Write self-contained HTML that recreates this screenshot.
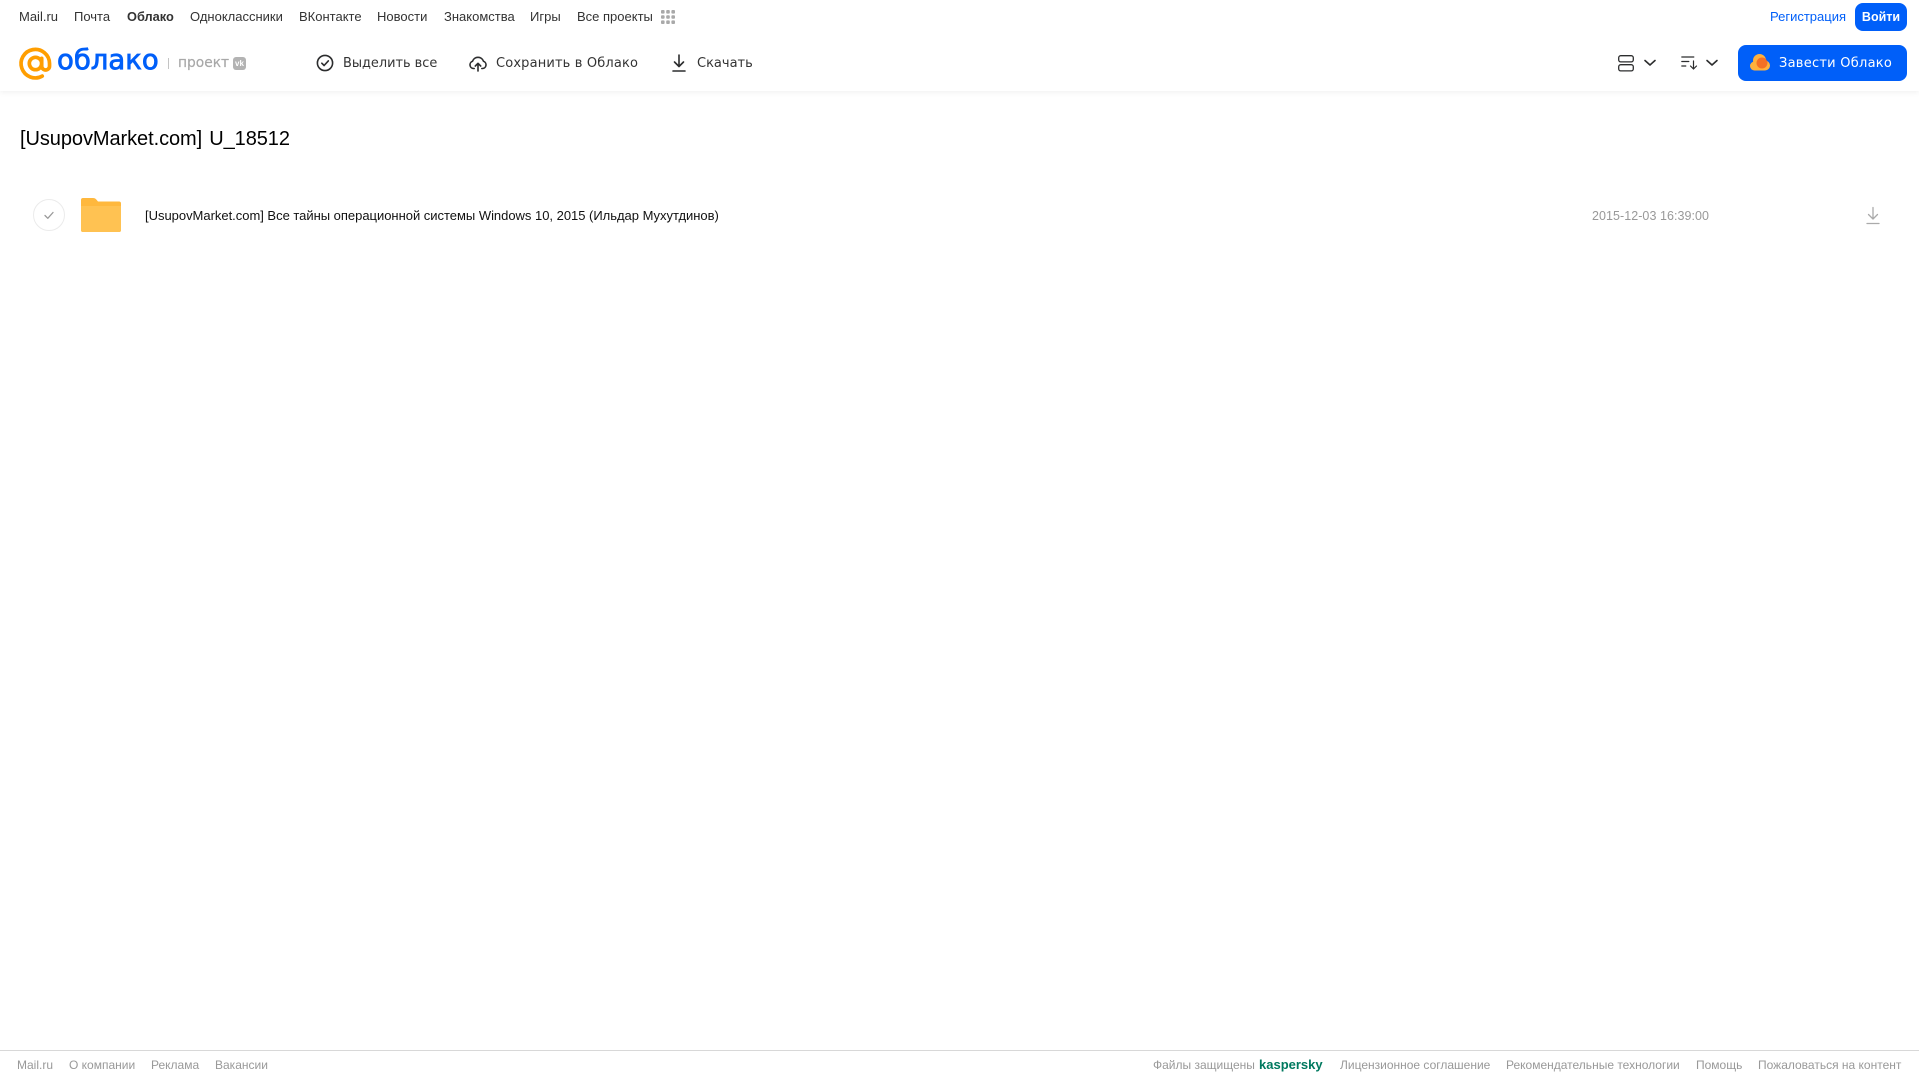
<!DOCTYPE html>
<html lang="ru">
<head>
<meta charset="utf-8">
<title>[UsupovMarket.com] U_18512</title>
<style>
html,body{margin:0;padding:0;background:#fff}
body{position:relative;width:1919px;height:1079px;overflow:hidden;font-family:"Liberation Sans",Arial,sans-serif;color:#2c2d2e}
.t{position:absolute;white-space:nowrap;text-decoration:none}
svg{position:absolute;display:block;overflow:visible}
.top{top:8px;height:17px;line-height:17px;font-size:13px;color:#333}
.act{top:55px;height:18px;line-height:18px;font-family:"DejaVu Sans",sans-serif;font-size:13px;color:#333}
.foot{top:1057px;height:16px;line-height:16px;font-size:12px;color:#999}
#hdr{position:absolute;left:0;top:0;width:1919px;height:91px;background:#fff;box-shadow:0 1px 6px rgba(0,0,0,.07)}
#ln{position:absolute;left:0;top:1050px;width:1919px;height:1px;background:#d8d8d8}
.btn{position:absolute;background:#005ff9;color:#fff}
</style>
</head>
<body>
<div id="hdr"></div>

<a class="t top" style="left:19px">Mail.ru</a>
<a class="t top" style="left:74px">Почта</a>
<a class="t top" style="left:127px;font-weight:700;font-size:12.8px">Облако</a>
<a class="t top" style="left:190px">Одноклассники</a>
<a class="t top" style="left:299px">ВКонтакте</a>
<a class="t top" style="left:377px">Новости</a>
<a class="t top" style="left:444px">Знакомства</a>
<a class="t top" style="left:530px">Игры</a>
<a class="t top" style="left:577px">Все проекты</a>
<svg style="left:661px;top:10px" width="14" height="14" fill="#a9a9a9">
<rect x="0" y="0" width="3.6" height="3.6" rx="1"/><rect x="5.2" y="0" width="3.6" height="3.6" rx="1"/><rect x="10.4" y="0" width="3.6" height="3.6" rx="1"/>
<rect x="0" y="5.2" width="3.6" height="3.6" rx="1"/><rect x="5.2" y="5.2" width="3.6" height="3.6" rx="1"/><rect x="10.4" y="5.2" width="3.6" height="3.6" rx="1"/>
<rect x="0" y="10.4" width="3.6" height="3.6" rx="1"/><rect x="5.2" y="10.4" width="3.6" height="3.6" rx="1"/><rect x="10.4" y="10.4" width="3.6" height="3.6" rx="1"/>
</svg>

<a class="t top" style="left:1770px;color:#005ff9">Регистрация</a>
<div class="btn" style="left:1855px;top:3px;width:52px;height:28px;border-radius:8px;line-height:28px;text-align:center;font-size:12.5px;font-weight:700">Войти</div>

<!-- logo -->
<svg style="left:19px;top:47px" width="33" height="33" viewBox="0 0 32 32" fill="none" stroke="#ff9e00" stroke-width="3.6" stroke-linecap="round">
<circle cx="16" cy="16" r="6"/>
<path d="M22 11v7.5a3.7 3.7 0 0 0 7.6 0V16A13.8 13.8 0 1 0 22.5 28.2"/>
</svg>
<div class="t" style="left:57px;top:40px;height:40px;line-height:40px;font-family:'DejaVu Sans',sans-serif;font-size:27.5px;color:#005ff9;-webkit-text-stroke:.8px #005ff9">облако</div>
<div style="position:absolute;left:168px;top:58px;width:1px;height:11px;background:#c4c4c4"></div>
<div class="t" style="left:178px;top:54px;height:18px;line-height:18px;font-family:'DejaVu Sans',sans-serif;font-size:13.8px;color:#a8a8a8;-webkit-text-stroke:.2px #a8a8a8">проект</div>
<div class="t" style="left:233px;top:57px;width:13px;height:13px;border-radius:3px;background:#b3b3b3;color:#fff;font-size:8px;font-weight:700;line-height:13px;text-align:center">vk</div>

<!-- actions -->
<svg style="left:316px;top:54px" width="18" height="18" viewBox="0 0 18 18" fill="none" stroke="#2c2d2e" stroke-width="1.6" stroke-linecap="round" stroke-linejoin="round">
<circle cx="9" cy="9" r="7.6"/><path d="M5.8 9.2l2.3 2.3 4.2-4.6"/>
</svg>
<div class="t act" style="left:343px;font-size:12.9px">Выделить все</div>

<svg style="left:469px;top:54px" width="18" height="18" viewBox="0 0 18 18" fill="none" stroke="#2c2d2e" stroke-width="1.6" stroke-linecap="round" stroke-linejoin="round">
<path d="M5.2 14.500H4.500A3.700 3.700 0 0 1 3.500 7.300 5.800 5.800 0 0 1 14.500 7.300 3.700 3.700 0 0 1 13.500 14.500H12.800"/><path d="M9 17V9.500M6.300 12L9 9.300l2.700 2.700"/>
</svg>
<div class="t act" style="left:496px;letter-spacing:.15px">Сохранить в Облако</div>

<svg style="left:671px;top:54px" width="16" height="18" viewBox="0 0 16 18" fill="none" stroke="#2c2d2e" stroke-width="1.6" stroke-linecap="round" stroke-linejoin="round">
<path d="M8 1v11M3.500 8L8 12.500 12.500 8M2 17h12"/>
</svg>
<div class="t act" style="left:697px">Скачать</div>

<svg style="left:1618px;top:55px" width="16" height="17" viewBox="0 0 16 17" fill="none" stroke="#2c2d2e" stroke-width="1.300">
<rect x=".7" y=".7" width="14.600" height="6.200" rx="2"/><rect x=".7" y="9.700" width="14.600" height="6.200" rx="2"/>
</svg>
<svg style="left:1644px;top:59px" width="12" height="8" viewBox="0 0 12 8" fill="none" stroke="#2c2d2e" stroke-width="1.600" stroke-linecap="round" stroke-linejoin="round"><path d="M1 1.500l5 4.500 5-4.500"/></svg>
<svg style="left:1681px;top:56px" width="17" height="14" viewBox="0 0 17 14" fill="none" stroke="#2c2d2e" stroke-width="1.200" stroke-linecap="round" stroke-linejoin="round">
<path d="M.8 1h12M.8 5.500h7M.8 10h4M12.500 5v8M9.500 10l3 3 3-3"/>
</svg>
<svg style="left:1706px;top:59px" width="12" height="8" viewBox="0 0 12 8" fill="none" stroke="#2c2d2e" stroke-width="1.600" stroke-linecap="round" stroke-linejoin="round"><path d="M1 1.500l5 4.500 5-4.500"/></svg>

<div class="btn" style="left:1738px;top:45px;width:169px;height:36px;border-radius:8px"></div>
<svg style="left:1750px;top:54px" width="20" height="17" viewBox="0 0 20 17">
<g fill="#ffb13d"><circle cx="4.500" cy="12" r="4.500"/><circle cx="9.500" cy="6.500" r="6.500"/><circle cx="15" cy="11.500" r="5"/><rect x="4.500" y="9" width="10.500" height="7.500"/></g>
<circle cx="12" cy="9" r="5.500" fill="#f26522" opacity=".85"/>
</svg>
<div class="t" style="left:1779px;top:55px;height:18px;line-height:18px;font-family:'DejaVu Sans',sans-serif;font-size:13px;letter-spacing:.25px;color:#fff">Завести Облако</div>

<!-- title -->
<h1 class="t" style="margin:0;left:20px;top:126px;height:26px;line-height:26px;font-size:20px;font-weight:400;color:#000;letter-spacing:-.07px;word-spacing:1.600px">[UsupovMarket.com] U_18512</h1>

<!-- row -->
<svg style="left:33px;top:199px" width="32" height="32" viewBox="0 0 32 32" fill="none">
<circle cx="16" cy="16" r="15.500" stroke="#ebebeb"/>
<path d="M12 16.500l2.800 2.800 5.200-5.800" stroke="#999" stroke-width="1.300" stroke-linecap="round" stroke-linejoin="round"/>
</svg>
<svg style="left:81px;top:198px" width="40" height="34" viewBox="0 0 40 34">
<path fill="#ffb83d" d="M2 0h10c1.500 0 2.500.6 3.300 1.500L17 3.500h21a2 2 0 0 1 2 2V32a2 2 0 0 1-2 2H2a2 2 0 0 1-2-2V2a2 2 0 0 1 2-2z"/>
<path fill="#ffc252" d="M0 8h40v24a2 2 0 0 1-2 2H2a2 2 0 0 1-2-2z"/>
</svg>
<div class="t" style="left:145px;top:207px;height:17px;line-height:17px;font-size:13px;letter-spacing:-.02px;color:#111">[UsupovMarket.com] Все тайны операционной системы Windows 10, 2015 (Ильдар Мухутдинов)</div>
<div class="t" style="left:1592px;top:208px;height:17px;line-height:17px;font-size:12.500px;letter-spacing:.05px;color:#999">2015-12-03 16:39:00</div>
<svg style="left:1866px;top:206px" width="14" height="19" viewBox="0 0 14 19" fill="none" stroke="#aaa" stroke-width="1.300" stroke-linecap="round" stroke-linejoin="round">
<path d="M7 1.500v11M2.500 8.500L7 13l4.500-4.500M1 17.500h12"/>
</svg>

<!-- footer -->
<div id="ln"></div>
<a class="t foot" style="left:17px">Mail.ru</a>
<a class="t foot" style="left:69px">О компании</a>
<a class="t foot" style="left:151px">Реклама</a>
<a class="t foot" style="left:215px">Вакансии</a>
<a class="t foot" style="left:1153px">Файлы защищены</a>
<a class="t foot" style="left:1259px;color:#00795f;font-weight:700;font-size:13px">kaspersky</a>
<a class="t foot" style="left:1340px">Лицензионное соглашение</a>
<a class="t foot" style="left:1506px">Рекомендательные технологии</a>
<a class="t foot" style="left:1696px">Помощь</a>
<a class="t foot" style="left:1758px">Пожаловаться на контент</a>
</body>
</html>
